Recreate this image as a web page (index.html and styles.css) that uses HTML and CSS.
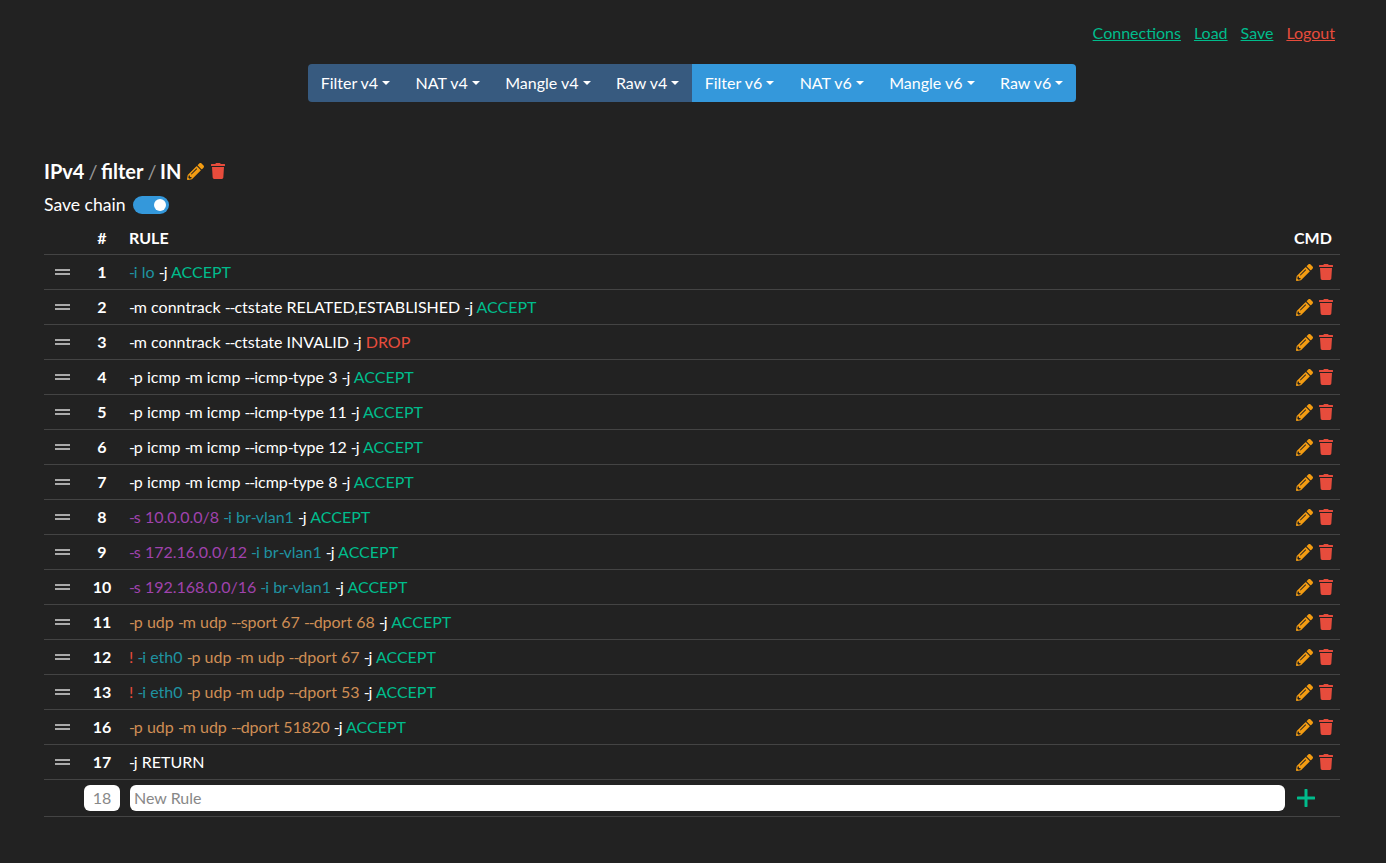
FILE: index.html
```html
<!DOCTYPE html>
<html lang="en">
<head>
<meta charset="utf-8">
<title>Filter</title>
<link rel="stylesheet" href="styles.css">
</head>
<body>
<svg class="defs" width="0" height="0" aria-hidden="true">
  <symbol id="pen" viewBox="0 0 512 512"><path d="M497.9 142.1l-46.1 46.1c-4.7 4.7-12.3 4.7-17 0l-111-111c-4.7-4.7-4.7-12.3 0-17l46.1-46.1c18.7-18.7 49.1-18.7 67.900 0l60.100 60.100c18.800 18.700 18.800 49.100 0 67.900zM284.200 99.800L21.600 362.400.400 483.900c-2.900 16.400 11.400 30.600 27.800 27.800l121.500-21.300 262.600-262.600c4.700-4.700 4.700-12.300 0-17l-111-111c-4.800-4.700-12.400-4.700-17.100 0zM124.100 339.900c-5.500-5.500-5.500-14.300 0-19.800l154-154c5.500-5.500 14.300-5.500 19.800 0s5.500 14.300 0 19.800l-154 154c-5.500 5.500-14.300 5.500-19.800 0zM88 424h48v36.300l-64.500 11.300-31.100-31.100L51.700 376H88v48z"/></symbol>
  <symbol id="trash" viewBox="0 0 448 512"><path d="M432 32H312l-9.400-18.700A24 24 0 0 0 281.100 0H166.800a23.700 23.700 0 0 0-21.400 13.300L136 32H16A16 16 0 0 0 0 48v32a16 16 0 0 0 16 16h416a16 16 0 0 0 16-16V48a16 16 0 0 0-16-16zM53.200 467a48 48 0 0 0 47.900 45h245.800a48 48 0 0 0 47.900-45L416 128H32z"/></symbol>
</svg>
<div class="top-links">
  <a href="#" class="link">Connections</a>
  <a href="#" class="link">Load</a>
  <a href="#" class="link">Save</a>
  <a href="#" class="link danger">Logout</a>
</div>
<nav class="menu-wrap">
  <div class="menu">
    <a class="tab v4" href="#">Filter v4</a>
    <a class="tab v4" href="#">NAT v4</a>
    <a class="tab v4" href="#">Mangle v4</a>
    <a class="tab v4" href="#">Raw v4</a>
    <a class="tab v6" href="#">Filter v6</a>
    <a class="tab v6" href="#">NAT v6</a>
    <a class="tab v6" href="#">Mangle v6</a>
    <a class="tab v6" href="#">Raw v6</a>
  </div>
</nav>
<main class="content">
  <h1 class="crumb"><span>IPv4</span><i>/</i><span>filter</span><i>/</i><span>IN</span>
    <svg class="ico pen head-pen"><use href="#pen"/></svg>
    <svg class="ico trash head-trash"><use href="#trash"/></svg>
  </h1>
  <div class="save-chain"><span>Save chain</span><span class="switch"></span></div>
  <table class="rules">
    <thead><tr><th class="c-drag"></th><th class="c-num">#</th><th class="c-rule">RULE</th><th class="c-cmd">CMD</th></tr></thead>
    <tbody>
      <tr><td class="c-drag"><b class="grip"></b></td><td class="c-num">1</td><td class="c-rule"><span class="i"><u>-</u>i lo</span> <u>-</u>j <span class="ok">ACCEPT</span></td><td class="c-cmd"><svg class="ico pen"><use href="#pen"/></svg><svg class="ico trash"><use href="#trash"/></svg></td></tr>
      <tr><td class="c-drag"><b class="grip"></b></td><td class="c-num">2</td><td class="c-rule"><u>-</u>m conntrack <u>--</u>ctstate RELATED,ESTABLISHED <u>-</u>j <span class="ok">ACCEPT</span></td><td class="c-cmd"><svg class="ico pen"><use href="#pen"/></svg><svg class="ico trash"><use href="#trash"/></svg></td></tr>
      <tr><td class="c-drag"><b class="grip"></b></td><td class="c-num">3</td><td class="c-rule"><u>-</u>m conntrack <u>--</u>ctstate INVALID <u>-</u>j <span class="no">DROP</span></td><td class="c-cmd"><svg class="ico pen"><use href="#pen"/></svg><svg class="ico trash"><use href="#trash"/></svg></td></tr>
      <tr><td class="c-drag"><b class="grip"></b></td><td class="c-num">4</td><td class="c-rule"><u>-</u>p icmp <u>-</u>m icmp <u>--</u>icmp<u>-</u>type 3 <u>-</u>j <span class="ok">ACCEPT</span></td><td class="c-cmd"><svg class="ico pen"><use href="#pen"/></svg><svg class="ico trash"><use href="#trash"/></svg></td></tr>
      <tr><td class="c-drag"><b class="grip"></b></td><td class="c-num">5</td><td class="c-rule"><u>-</u>p icmp <u>-</u>m icmp <u>--</u>icmp<u>-</u>type 11 <u>-</u>j <span class="ok">ACCEPT</span></td><td class="c-cmd"><svg class="ico pen"><use href="#pen"/></svg><svg class="ico trash"><use href="#trash"/></svg></td></tr>
      <tr><td class="c-drag"><b class="grip"></b></td><td class="c-num">6</td><td class="c-rule"><u>-</u>p icmp <u>-</u>m icmp <u>--</u>icmp<u>-</u>type 12 <u>-</u>j <span class="ok">ACCEPT</span></td><td class="c-cmd"><svg class="ico pen"><use href="#pen"/></svg><svg class="ico trash"><use href="#trash"/></svg></td></tr>
      <tr><td class="c-drag"><b class="grip"></b></td><td class="c-num">7</td><td class="c-rule"><u>-</u>p icmp <u>-</u>m icmp <u>--</u>icmp<u>-</u>type 8 <u>-</u>j <span class="ok">ACCEPT</span></td><td class="c-cmd"><svg class="ico pen"><use href="#pen"/></svg><svg class="ico trash"><use href="#trash"/></svg></td></tr>
      <tr><td class="c-drag"><b class="grip"></b></td><td class="c-num">8</td><td class="c-rule"><span class="s"><u>-</u>s 10.0.0.0/8</span> <span class="i"><u>-</u>i br<u>-</u>vlan1</span> <u>-</u>j <span class="ok">ACCEPT</span></td><td class="c-cmd"><svg class="ico pen"><use href="#pen"/></svg><svg class="ico trash"><use href="#trash"/></svg></td></tr>
      <tr><td class="c-drag"><b class="grip"></b></td><td class="c-num">9</td><td class="c-rule"><span class="s"><u>-</u>s 172.16.0.0/12</span> <span class="i"><u>-</u>i br<u>-</u>vlan1</span> <u>-</u>j <span class="ok">ACCEPT</span></td><td class="c-cmd"><svg class="ico pen"><use href="#pen"/></svg><svg class="ico trash"><use href="#trash"/></svg></td></tr>
      <tr><td class="c-drag"><b class="grip"></b></td><td class="c-num">10</td><td class="c-rule"><span class="s"><u>-</u>s 192.168.0.0/16</span> <span class="i"><u>-</u>i br<u>-</u>vlan1</span> <u>-</u>j <span class="ok">ACCEPT</span></td><td class="c-cmd"><svg class="ico pen"><use href="#pen"/></svg><svg class="ico trash"><use href="#trash"/></svg></td></tr>
      <tr><td class="c-drag"><b class="grip"></b></td><td class="c-num">11</td><td class="c-rule"><span class="p"><u>-</u>p udp <u>-</u>m udp <u>--</u>sport 67 <u>--</u>dport 68</span> <u>-</u>j <span class="ok">ACCEPT</span></td><td class="c-cmd"><svg class="ico pen"><use href="#pen"/></svg><svg class="ico trash"><use href="#trash"/></svg></td></tr>
      <tr><td class="c-drag"><b class="grip"></b></td><td class="c-num">12</td><td class="c-rule"><span class="neg">!</span> <span class="i"><u>-</u>i eth0</span> <span class="p"><u>-</u>p udp <u>-</u>m udp <u>--</u>dport 67</span> <u>-</u>j <span class="ok">ACCEPT</span></td><td class="c-cmd"><svg class="ico pen"><use href="#pen"/></svg><svg class="ico trash"><use href="#trash"/></svg></td></tr>
      <tr><td class="c-drag"><b class="grip"></b></td><td class="c-num">13</td><td class="c-rule"><span class="neg">!</span> <span class="i"><u>-</u>i eth0</span> <span class="p"><u>-</u>p udp <u>-</u>m udp <u>--</u>dport 53</span> <u>-</u>j <span class="ok">ACCEPT</span></td><td class="c-cmd"><svg class="ico pen"><use href="#pen"/></svg><svg class="ico trash"><use href="#trash"/></svg></td></tr>
      <tr><td class="c-drag"><b class="grip"></b></td><td class="c-num">16</td><td class="c-rule"><span class="p"><u>-</u>p udp <u>-</u>m udp <u>--</u>dport 51820</span> <u>-</u>j <span class="ok">ACCEPT</span></td><td class="c-cmd"><svg class="ico pen"><use href="#pen"/></svg><svg class="ico trash"><use href="#trash"/></svg></td></tr>
      <tr><td class="c-drag"><b class="grip"></b></td><td class="c-num">17</td><td class="c-rule"><u>-</u>j RETURN</td><td class="c-cmd"><svg class="ico pen"><use href="#pen"/></svg><svg class="ico trash"><use href="#trash"/></svg></td></tr>
      <tr class="new-row"><td class="c-drag"></td><td class="c-num"><input class="field num-field" value="18"></td><td class="c-rule"><input class="field rule-field" placeholder="New Rule"></td><td class="c-cmd"><svg class="plus" viewBox="0 0 18 18"><path d="M9 1v16M1 9h16"/></svg></td></tr>
    </tbody>
  </table>
</main>
</body>
</html>
```
FILE: styles.css
```css
* { box-sizing: border-box; }
html, body { margin: 0; padding: 0; }
body {
  background: #222;
  color: #fff;
  font-family: Lato, "Liberation Sans", sans-serif;
  font-size: 16px;
  line-height: 1.5;
  min-height: 863px;
}
.defs { position: absolute; }
.top-links {
  display: flex;
  justify-content: flex-end;
  gap: 13px;
  padding: 21px 51px 0 0;
  height: 64px;
}
.link { color: #00bc8c; text-decoration: underline; }
.link.danger { color: #e74c3c; }
.menu-wrap { display: flex; justify-content: center; padding-right: 2px; }
.menu { display: flex; border-radius: 4px; overflow: hidden; height: 38px; }
.tab {
  display: flex;
  align-items: center;
  padding: 0 12.7px;
  color: #fff;
  text-decoration: none;
}
.tab::after {
  content: "";
  margin-left: 0.255em;
  border-top: 0.3em solid #fff;
  border-left: 0.3em solid transparent;
  border-right: 0.3em solid transparent;
}
.v4 { background: #375a7f; }
.v6 { background: #3498db; }
.content { padding: 0 46px 0 44px; }
.crumb {
  display: flex;
  align-items: center;
  margin: 54px 0 0;
  font-size: 20px;
  font-weight: 700;
  line-height: 30px;
  height: 30px;
}
.crumb i { font-style: normal; font-weight: 400; color: #999; padding: 0 3.5px 0 4px; }
.head-pen { margin-left: 6px; }
.head-trash { margin-left: 7px; }
.save-chain { display: flex; align-items: center; gap: 7px; height: 24px; margin-top: 7px; font-size: 17.6px; }
.switch {
  position: relative;
  width: 36px;
  height: 18px;
  border-radius: 9px;
  background: #3498db;
}
.switch::after {
  content: "";
  position: absolute;
  right: 3px;
  top: 3px;
  width: 12px;
  height: 12px;
  border-radius: 50%;
  background: #fff;
}
.rules { width: 1296px; border-collapse: collapse; margin-top: 7px; }
.rules th, .rules td { padding: 0; border-bottom: 1px solid #444; height: 35px; vertical-align: middle; }
.rules th { height: 30px; font-weight: 700; text-align: left; padding-bottom: 1px; }
.c-drag { width: 36px; }
.rules .c-num { width: 49px; font-weight: 700; text-align: center; padding-right: 5px; }
.c-cmd { width: 46px; white-space: nowrap; }
.grip { display: block; width: 15px; height: 6px; margin-left: 11px; border-top: 2px solid #aaa; border-bottom: 2px solid #aaa; }
.ico { display: inline-block; flex: none; vertical-align: middle; }
.pen { width: 17px; height: 17px; fill: #f39c12; }
.trash { width: 14px; height: 16px; fill: #e74c3c; }
.c-cmd .ico { position: relative; top: -1px; }
.c-cmd .pen { margin-left: 2px; }
.c-cmd .trash { margin-left: 6px; }
.c-rule u { text-decoration: none; letter-spacing: -1.1px; }
.i { color: #1f93a1; }
.s { color: #a043ad; }
.p { color: #cf8e55; }
.neg { color: #e74c3c; }
.ok { color: #00bc8c; }
.no { color: #e74c3c; }
.new-row td { height: 37px; }
.field {
  display: block;
  height: 26px;
  border: 0;
  border-radius: 6px;
  background: #fff;
  font: 16px Lato, "Liberation Sans", sans-serif;
  color: #888;
  padding: 0 4px;
  outline: none;
}
.field::placeholder { color: #888; opacity: 1; }
.num-field { width: 36px; margin-left: 4px; text-align: center; font-weight: 400; }
.rule-field { width: 1155px; margin-left: 1px; }
.plus { display: block; width: 18px; height: 18px; margin-left: 3px; fill: none; stroke: #00bc8c; stroke-width: 3; stroke-linecap: round; }
```
